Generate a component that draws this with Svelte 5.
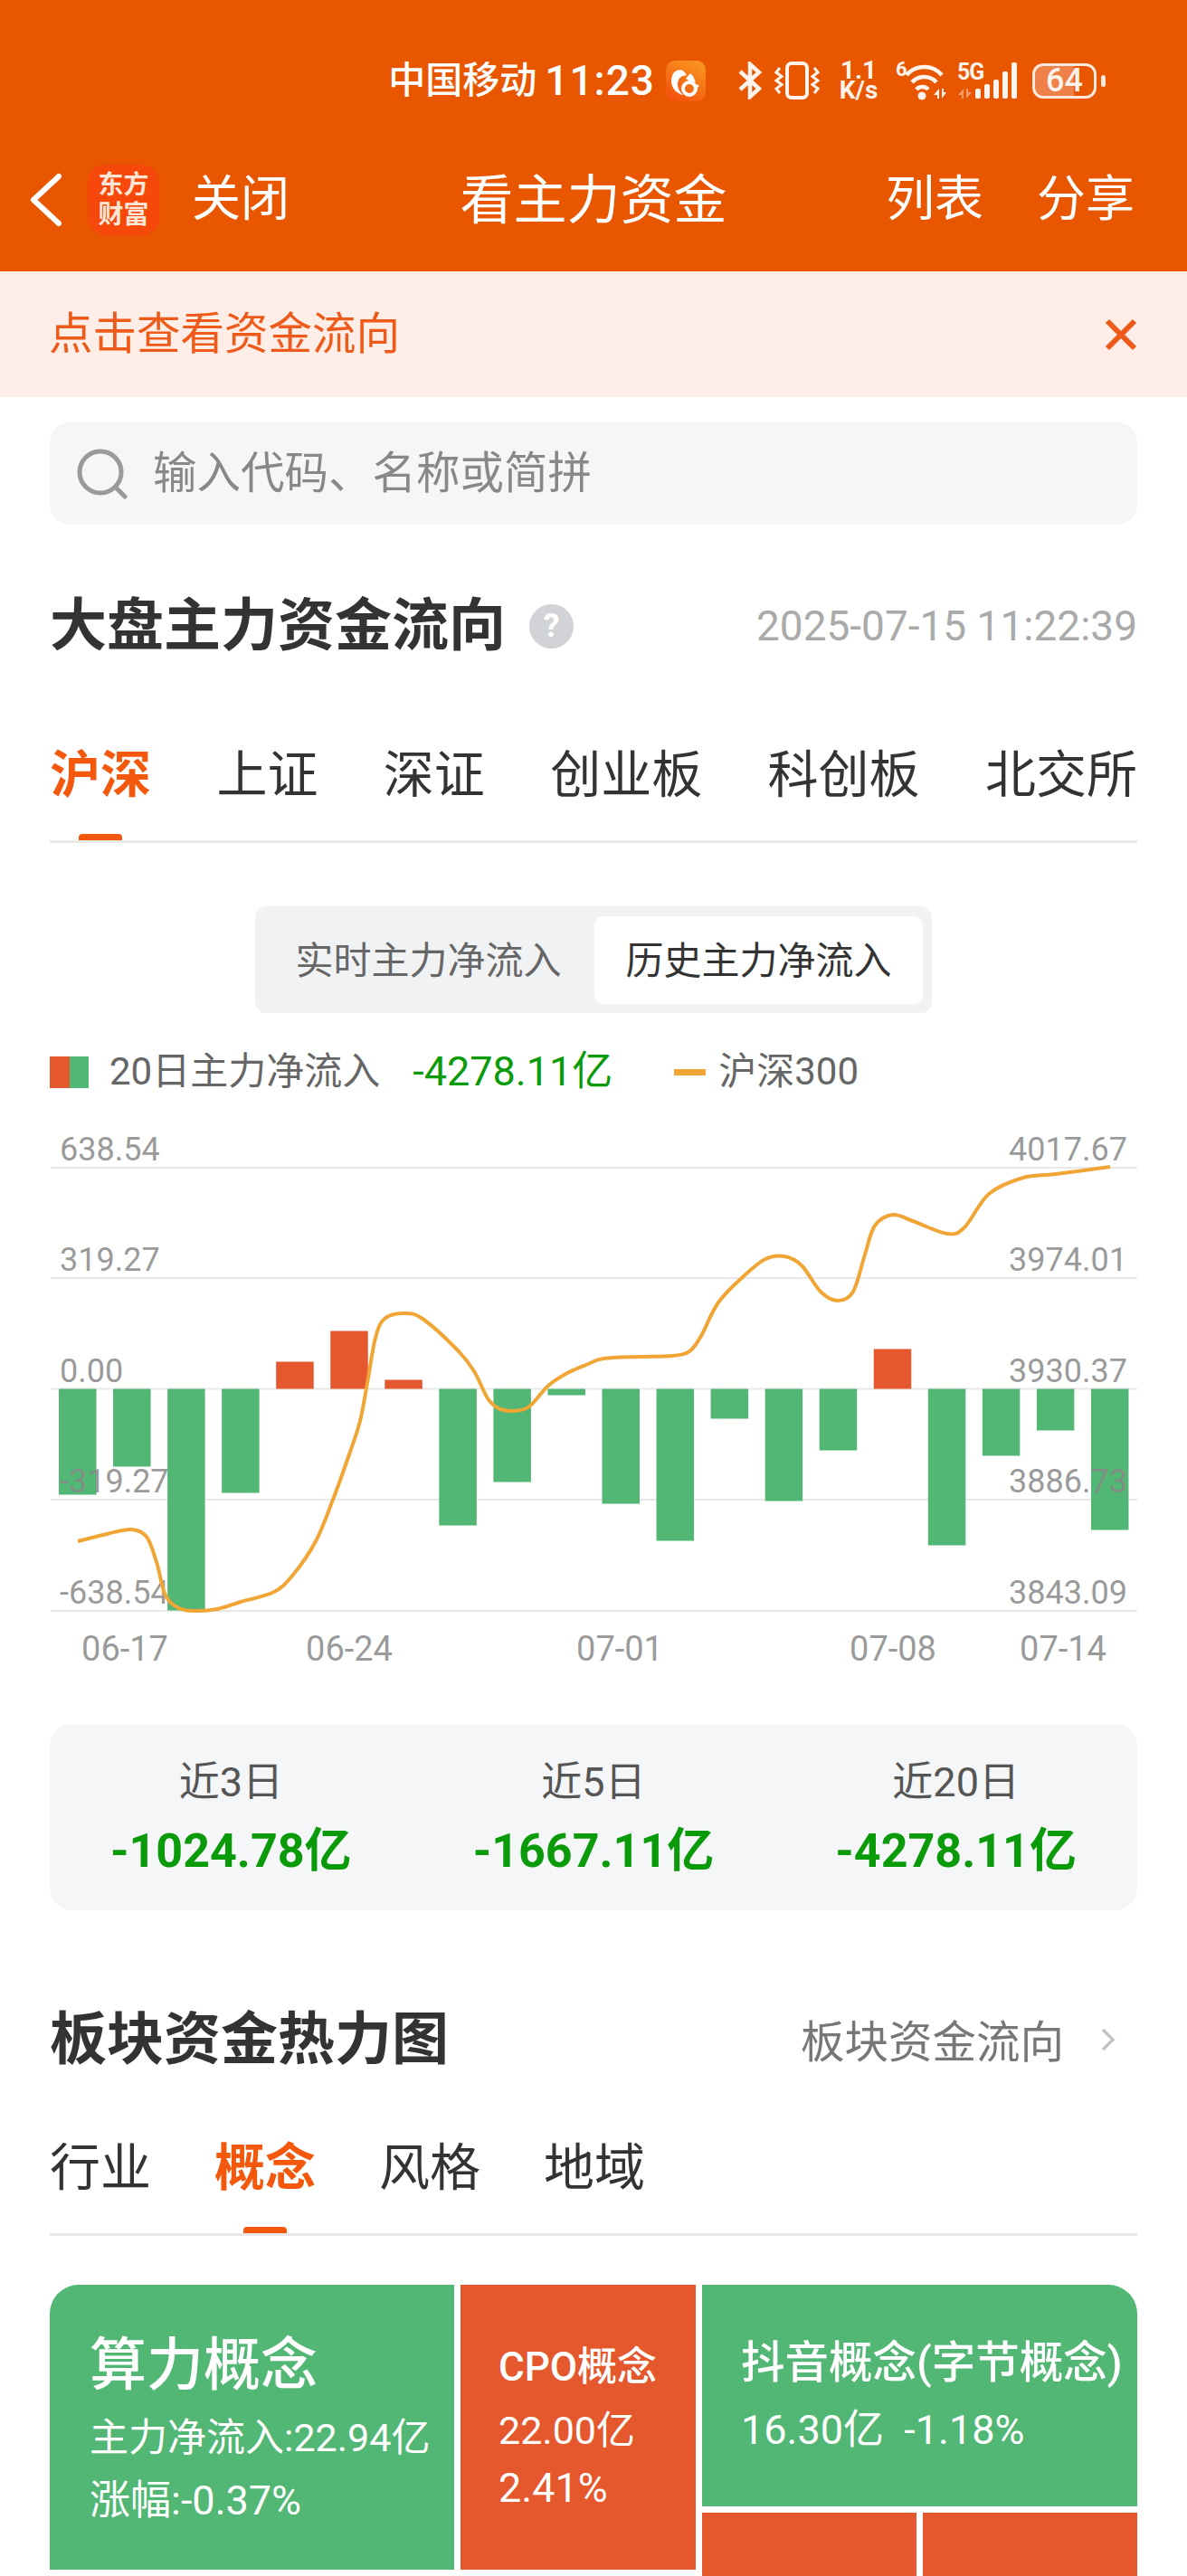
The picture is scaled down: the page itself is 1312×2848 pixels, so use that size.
<script>
  // bar bottoms/tops as measured on the page, zero line at y=1535.5
  const zero = 1535.5
  const flows = [-117, -86, -245, -115, 30, 64, 10, -151, -103, -7, -127, -168, -33, -124, -68, 44, -173, -74, -46, -156]
  const bars = flows.map((v, i) => ({
    x: 65 + i * 60.05,
    y: v > 0 ? zero - v : zero,
    h: Math.abs(v),
    up: v > 0
  }))

  const grid = [1291, 1413, 1535.5, 1658, 1781]
  const leftLabels = ['638.54', '319.27', '0.00', '-319.27', '-638.54']
  const rightLabels = ['4017.67', '3974.01', '3930.37', '3886.73', '3843.09']
  const dates = [['06-17', 138], ['06-24', 386], ['07-01', 685], ['07-08', 987], ['07-14', 1175]]

  const line = [
    [86, 1704], [118, 1696], [145, 1691], [162, 1699], [173, 1727], [183, 1764], [198, 1778], [215, 1781],
    [240, 1779], [266, 1771], [303, 1760], [324, 1741], [349, 1704], [368, 1658], [386, 1608], [398, 1571],
    [406, 1529], [415, 1479], [425, 1458], [446, 1452], [467, 1458], [506, 1493], [524, 1516], [539, 1546],
    [551, 1557], [567, 1560], [585, 1555], [606, 1532], [627, 1518], [650, 1508], [667, 1502], [705, 1500],
    [743, 1499], [762, 1494], [775, 1477], [794, 1440], [823, 1410], [846, 1392], [867, 1389], [886, 1399],
    [907, 1428], [926, 1438], [943, 1428], [956, 1387], [967, 1355], [987, 1343], [1009, 1350], [1047, 1364],
    [1066, 1357], [1093, 1320], [1131, 1302], [1167, 1298], [1227, 1290]
  ]

  function smooth(pts) {
    let d = `M${pts[0][0]} ${pts[0][1]}`
    for (let i = 0; i < pts.length - 1; i++) {
      const p0 = pts[i - 1] || pts[i]
      const p1 = pts[i]
      const p2 = pts[i + 1]
      const p3 = pts[i + 2] || p2
      const c1x = p1[0] + (p2[0] - p0[0]) / 6
      const c1y = p1[1] + (p2[1] - p0[1]) / 6
      const c2x = p2[0] - (p3[0] - p1[0]) / 6
      const c2y = p2[1] - (p3[1] - p1[1]) / 6
      d += `C${c1x.toFixed(1)} ${c1y.toFixed(1)} ${c2x.toFixed(1)} ${c2y.toFixed(1)} ${p2[0]} ${p2[1]}`
    }
    return d
  }

  const marketTabs = ['沪深', '上证', '深证', '创业板', '科创板', '北交所']
  const sectorTabs = ['行业', '概念', '风格', '地域']
  const stats = [
    ['近3日', '-1024.78亿'],
    ['近5日', '-1667.11亿'],
    ['近20日', '-4278.11亿']
  ]
</script>

<div class="page">
  <header class="top">
    <div class="status">
      <span class="carrier">中国移动</span>
      <span class="clock">11:23</span>
      <svg class="app-ico" viewBox="0 0 44 45" width="44" height="45">
        <defs>
          <linearGradient id="uc" x1="0.8" y1="0" x2="0.3" y2="1">
            <stop offset="0" stop-color="#f8961e" />
            <stop offset="1" stop-color="#f4520f" />
          </linearGradient>
        </defs>
        <rect width="44" height="45" rx="10" fill="url(#uc)" />
        <path d="M9 13c3-3 8-4 11-1l3 4-4 1c-4 1-6 5-6 9 0 5 3 9 6 12-6-1-13-7-13-15 0-4 1-7 3-10z" fill="#fff" />
        <path d="M27 14l3 3 3 7-6-1-5-3z" fill="#fff" />
        <circle cx="26" cy="31" r="7" fill="none" stroke="#fff" stroke-width="4" />
        <circle cx="35" cy="28" r="1.5" fill="#fff" />
      </svg>
      <svg class="bt" viewBox="0 0 26 42" width="26" height="42">
        <path d="M2 11l21 19-10 9V3l10 9L2 31" fill="none" stroke="#fff3ec" stroke-width="4.5" />
      </svg>
      <svg class="vib" viewBox="0 0 50 42" width="50" height="42">
        <rect x="14" y="2" width="22" height="38" rx="5" fill="none" stroke="#fff3ec" stroke-width="4" />
        <path d="M6 7L2 12l6 4.500-6 4.500 6 4.500-6 4.500 4 5M44 7l4 5-6 4.500 6 4.500-6 4.500 6 4.500-4 5" fill="none" stroke="#fff3ec" stroke-width="3" />
      </svg>
      <div class="speed"><span>1.1</span><span>K/s</span></div>
      <svg class="wifi" viewBox="0 0 56 42" width="56" height="42">
        <text x="0" y="16" class="tiny">6</text>
        <path d="M12 15C22 3 41 3 51 15M18 23C25 15 38 15 45 23M23 31c3-4 10-4 13 0" fill="none" stroke="#fff3ec" stroke-width="4.500" />
        <circle cx="29" cy="38" r="4.500" fill="#fff3ec" />
        <path d="M48 30v11h-2v-4h-4zM51 41V30h2v4h3z" fill="#fff3ec" />
      </svg>
      <svg class="sig" viewBox="0 0 66 42" width="66" height="42">
        <text x="0" y="20" class="five">5G</text>
        <path d="M7 30v11H5v-4H1zM10 41V30h2v4h4z" fill="#f79a70" />
        <rect x="20" y="30" width="6" height="11" rx="2" fill="#fff3ec" />
        <rect x="30" y="25" width="6" height="16" rx="2" fill="#fff3ec" />
        <rect x="40" y="20" width="6" height="21" rx="2" fill="#fff3ec" />
        <rect x="50" y="11" width="6" height="30" rx="2" fill="#fff3ec" />
        <rect x="60" y="1" width="6" height="40" rx="2" fill="#fff3ec" />
      </svg>
      <div class="batt">
        <div class="batt-body"><span>64</span></div>
        <i class="batt-nub"></i>
      </div>
    </div>
    <nav class="nav">
      <div class="nav-left">
        <svg class="back" viewBox="0 0 36 60" width="36" height="60">
          <path d="M32 4L4 30l28 26" fill="none" stroke="#fff" stroke-width="6" stroke-linecap="round" stroke-linejoin="round" />
        </svg>
        <div class="logo"><span>东方</span><span>财富</span></div>
        <span class="nav-txt">关闭</span>
      </div>
      <div class="nav-title">看主力资金</div>
      <div class="nav-right">
        <span class="nav-txt">列表</span>
        <span class="nav-txt">分享</span>
      </div>
    </nav>
  </header>

  <div class="banner">
    <span>点击查看资金流向</span>
    <svg viewBox="0 0 36 36" width="36" height="36">
      <path d="M3 3l30 30M33 3L3 33" stroke="#ee5a1a" stroke-width="6" fill="none" />
    </svg>
  </div>

  <main class="main">
    <div class="search">
      <svg viewBox="0 0 56 56" width="56" height="56">
        <circle cx="26" cy="26" r="23" fill="none" stroke="#9a9a9a" stroke-width="5" />
        <path d="M43 43l10 10" stroke="#9a9a9a" stroke-width="5" stroke-linecap="round" />
      </svg>
      <span>输入代码、名称或简拼</span>
    </div>

    <div class="sec-head first">
      <div class="sec-title">
        <h2>大盘主力资金流向</h2>
        <span class="help">?</span>
      </div>
      <span class="stamp">2025-07-15 11:22:39</span>
    </div>

    <div class="tabs market">
      {#each marketTabs as t, i}
        <span class="tab" class:on={i === 0}>{t}</span>
      {/each}
    </div>

    <div class="toggle">
      <span class="opt">实时主力净流入</span>
      <span class="opt active">历史主力净流入</span>
    </div>

    <div class="legend">
      <i class="swatch"></i>
      <span class="lg-name">20日主力净流入</span>
      <span class="lg-val">-4278.11亿</span>
      <i class="lg-line"></i>
      <span class="lg-name">沪深300</span>
    </div>

    <svg class="chart" viewBox="55 1240 1202 610">
      {#each grid as y}
        <line x1="56" x2="1257" y1={y} y2={y} stroke="#e8e8e8" stroke-width="2" />
      {/each}
      {#each bars as b}
        <rect x={b.x} y={b.y} width="41.5" height={b.h} fill={b.up ? '#e5572c' : '#52b774'} />
      {/each}
      {#each grid as y, i}
        <text class="axis" x="66" y={y - 8}>{leftLabels[i]}</text>
        <text class="axis" x="1246" y={y - 8} text-anchor="end">{rightLabels[i]}</text>
      {/each}
      <path d={smooth(line)} fill="none" stroke="#f0a535" stroke-width="4" />
      {#each dates as d}
        <text class="axis date" x={d[1]} y="1836" text-anchor="middle">{d[0]}</text>
      {/each}
    </svg>

    <div class="stats">
      {#each stats as s}
        <div class="stat">
          <span class="stat-lb">{s[0]}</span>
          <strong>{s[1]}</strong>
        </div>
      {/each}
    </div>

    <div class="sec-head second">
      <h2>板块资金热力图</h2>
      <div class="more">
        <span>板块资金流向</span>
        <svg viewBox="0 0 18 28" width="18" height="28">
          <path d="M3 3l11 11L3 25" fill="none" stroke="#c4c4c4" stroke-width="3.500" />
        </svg>
      </div>
    </div>

    <div class="tabs sector">
      {#each sectorTabs as t, i}
        <span class="tab" class:on={i === 1}>{t}</span>
      {/each}
    </div>

    <div class="heat">
      <div class="cell big green">
        <b>算力概念</b>
        <span>主力净流入:22.94亿</span>
        <span>涨幅:-0.37%</span>
      </div>
      <div class="cell mid red">
        <b>CPO概念</b>
        <span>22.00亿</span>
        <span>2.41%</span>
      </div>
      <div class="heat-right">
        <div class="cell wide green">
          <b>抖音概念(字节概念)</b>
          <span>16.30亿&nbsp; -1.18%</span>
        </div>
        <div class="heat-row">
          <div class="cell red"></div>
          <div class="cell red"></div>
        </div>
      </div>
    </div>
  </main>
</div>

<style>
  :global(body) {
    margin: 0;
    background: #fff;
  }

  .page {
    width: 1312px;
    height: 2848px;
    overflow: hidden;
    font-family: Roboto, "Noto Sans CJK SC", sans-serif;
    color: #333;
  }

  /* header */
  .top {
    height: 300px;
    background: #e85600;
    color: #fff;
  }

  .status {
    height: 60px;
    padding: 59px 90px 21px 0;
    display: flex;
    align-items: center;
    justify-content: flex-end;
    font-weight: 500;
  }

  .carrier {
    font-size: 41px;
    line-height: 60px;
    margin-right: 9px;
  }

  .clock {
    font-size: 46px;
    line-height: 60px;
    letter-spacing: 1px;
    margin-right: 12px;
  }

  .bt {
    margin-left: 36px;
  }

  .vib {
    margin-left: 14px;
  }

  .speed {
    margin-left: 20px;
    width: 46px;
    display: flex;
    flex-direction: column;
    align-items: center;
    font-size: 28px;
    line-height: 22px;
    font-weight: 700;
    color: #fff3ec;
  }

  .wifi {
    margin-left: 18px;
    overflow: visible;
  }

  .sig {
    margin-left: 12px;
    overflow: visible;
  }

  .tiny {
    font-size: 22px;
    font-weight: 700;
    fill: #fff3ec;
  }

  .five {
    font-size: 25px;
    font-weight: 700;
    fill: #fff3ec;
    letter-spacing: -1px;
  }

  .batt {
    margin-left: 17px;
    display: flex;
    align-items: center;
    gap: 5px;
  }

  .batt-body {
    width: 71px;
    height: 39px;
    box-sizing: border-box;
    border: 3px solid #ffe8dc;
    border-radius: 12px;
    background: linear-gradient(90deg, #ee8048 66%, transparent 66%);
    display: flex;
    align-items: center;
    justify-content: center;
    font-size: 36px;
    font-weight: 500;
    color: #fff3ec;
  }

  .batt-nub {
    width: 5px;
    height: 13px;
    background: #ffe8dc;
    border-radius: 3px;
  }

  .nav {
    height: 158px;
    padding: 2px 58px 0;
    display: grid;
    grid-template-columns: 1fr auto 1fr;
    align-items: center;
  }

  .nav-left {
    display: flex;
    align-items: center;
  }

  .back {
    margin-left: -25px;
  }

  .nav-right {
    display: flex;
    justify-content: flex-end;
    gap: 59px;
  }

  .nav-txt {
    font-size: 54px;
    line-height: 1;
  }

  .nav-title {
    font-size: 59px;
    line-height: 1;
  }

  .logo {
    width: 79px;
    height: 78px;
    margin: 0 36px 0 28px;
    background: #f5480a;
    border-radius: 20px;
    color: #ffe6d6;
    font-size: 28px;
    line-height: 33px;
    font-weight: 700;
    display: flex;
    flex-direction: column;
    align-items: center;
    justify-content: center;
  }

  .banner {
    height: 139px;
    padding: 0 55px 0 54px;
    background: #ffeee8;
    color: #ee5a1a;
    font-size: 48.5px;
    display: flex;
    align-items: center;
    justify-content: space-between;
  }

  .banner span,
  .search span {
    padding-bottom: 10px;
  }

  .main {
    padding: 0 55px;
  }

  .search {
    margin-top: 28px;
    height: 113px;
    padding-left: 30px;
    box-sizing: border-box;
    background: #f5f6f8;
    border-radius: 22px;
    display: flex;
    align-items: center;
    gap: 28px;
    font-size: 48.5px;
    color: #888;
  }

  .sec-head {
    height: 80px;
    display: flex;
    align-items: center;
    justify-content: space-between;
  }

  .sec-head.first {
    margin-top: 72px;
  }

  .sec-head.second {
    margin-top: 103px;
  }

  .sec-title {
    display: flex;
    align-items: center;
    gap: 26px;
  }

  h2 {
    margin: 0;
    font-size: 63px;
    line-height: 80px;
    font-weight: 700;
    color: #333;
  }

  .help {
    width: 49px;
    height: 49px;
    border-radius: 50%;
    background: #d2d3d6;
    color: #fff;
    font-size: 36px;
    font-weight: 700;
    display: flex;
    align-items: center;
    justify-content: center;
  }

  .stamp {
    font-size: 46px;
    color: #aaa;
  }

  .tabs {
    position: relative;
    display: flex;
    border-bottom: 3px solid #e8e8e8;
    padding-bottom: 34px;
    height: 76px;
  }

  .market {
    margin-top: 87px;
    justify-content: space-between;
  }

  .sector {
    margin-top: 64px;
    gap: 70px;
  }

  .tab {
    position: relative;
    font-size: 56px;
    line-height: 76px;
    color: #333;
  }

  .tab.on {
    color: #f4580c;
    font-weight: 700;
  }

  .tab.on::after {
    content: "";
    position: absolute;
    left: 50%;
    bottom: -34px;
    width: 48px;
    height: 7px;
    margin-left: -24px;
    border-radius: 4px 4px 0 0;
    background: #f4580c;
  }

  .toggle {
    margin: 70px auto 0;
    width: 748px;
    height: 118px;
    padding: 11px 10px 10px 0;
    box-sizing: border-box;
    background: #f1f2f4;
    border-radius: 12px;
    display: flex;
  }

  .opt {
    flex: 1;
    display: flex;
    align-items: center;
    justify-content: center;
    padding: 0 0 6px 8px;
    font-size: 42px;
    color: #666;
    border-radius: 10px;
  }

  .opt.active {
    flex: 0 0 363px;
    box-sizing: border-box;
    padding-left: 0;
    background: #fff;
    color: #333;
  }

  .legend {
    margin-top: 40px;
    height: 50px;
    display: flex;
    align-items: center;
    font-size: 42px;
  }

  .legend span {
    padding-bottom: 10px;
  }

  .swatch {
    width: 43px;
    height: 35px;
    margin-right: 23px;
    background: linear-gradient(90deg, #e5572c 50%, #52b774 50%);
  }

  .lg-name {
    color: #666;
  }

  .lg-val {
    margin-left: 36px;
    font-size: 45px;
    color: #0a9a0a;
  }

  .lg-line {
    width: 35px;
    height: 7px;
    margin: 0 14px 0 68px;
    background: #f0a535;
  }

  .chart {
    display: block;
    width: 1202px;
    height: 610px;
    margin-top: 30px;
  }

  .axis {
    font-size: 36px;
    fill: #888;
    fill-opacity: 0.85;
  }

  .date {
    font-size: 38px;
  }

  .stats {
    margin-top: 56px;
    height: 206px;
    background: #f5f6f8;
    border-radius: 24px;
    display: grid;
    grid-template-columns: repeat(3, 1fr);
  }

  .stat {
    display: flex;
    flex-direction: column;
    align-items: center;
    padding-top: 40px;
  }

  .stat-lb {
    font-size: 45px;
    line-height: 50px;
    color: #555;
  }

  .stat strong {
    margin-top: 23px;
    font-size: 52px;
    line-height: 56px;
    color: #0a9a0a;
    font-weight: 700;
  }

  .more {
    display: flex;
    align-items: center;
    gap: 40px;
    font-size: 48.5px;
    color: #777;
    padding-right: 23px;
  }

  .more span {
    padding-bottom: 3px;
  }

  .heat {
    margin-top: 54px;
    height: 322px;
    display: flex;
    gap: 7px;
    overflow: hidden;
    border-radius: 32px 32px 0 0;
  }

  .cell {
    display: flex;
    flex-direction: column;
    box-sizing: border-box;
    color: #fff;
  }

  .green {
    background: #52b774;
  }

  .red {
    background: #e5572c;
  }

  .cell b {
    font-weight: 500;
  }

  .big {
    flex: 0 0 447px;
    height: 315px;
    padding: 54px 0 0 44px;
    font-size: 45px;
  }

  .big b {
    font-size: 63px;
    line-height: 70px;
  }

  .big span {
    line-height: 68px;
    white-space: nowrap;
  }

  .big span:nth-child(2) {
    margin-top: 11px;
    font-size: 43px;
  }

  .big span:nth-child(3) {
    margin-top: 2px;
  }

  .mid {
    flex: 0 0 260px;
    height: 315px;
    padding: 66px 0 0 42px;
    font-size: 45px;
  }

  .mid b {
    font-size: 44px;
    line-height: 50px;
  }

  .mid span {
    line-height: 63px;
  }

  .mid span:nth-child(2) {
    margin-top: 14px;
    font-size: 43px;
  }

  .heat-right {
    flex: 1;
    display: flex;
    flex-direction: column;
    gap: 7px;
  }

  .wide {
    height: 245px;
    padding: 62px 0 0 43px;
    font-size: 45px;
  }

  .wide b {
    font-size: 48.5px;
    line-height: 50px;
    white-space: nowrap;
  }

  .wide span {
    margin-top: 24px;
    line-height: 50px;
  }

  .heat-row {
    flex: 1;
    display: flex;
    gap: 7px;
  }

  .heat-row .cell {
    flex: 1;
  }
</style>
